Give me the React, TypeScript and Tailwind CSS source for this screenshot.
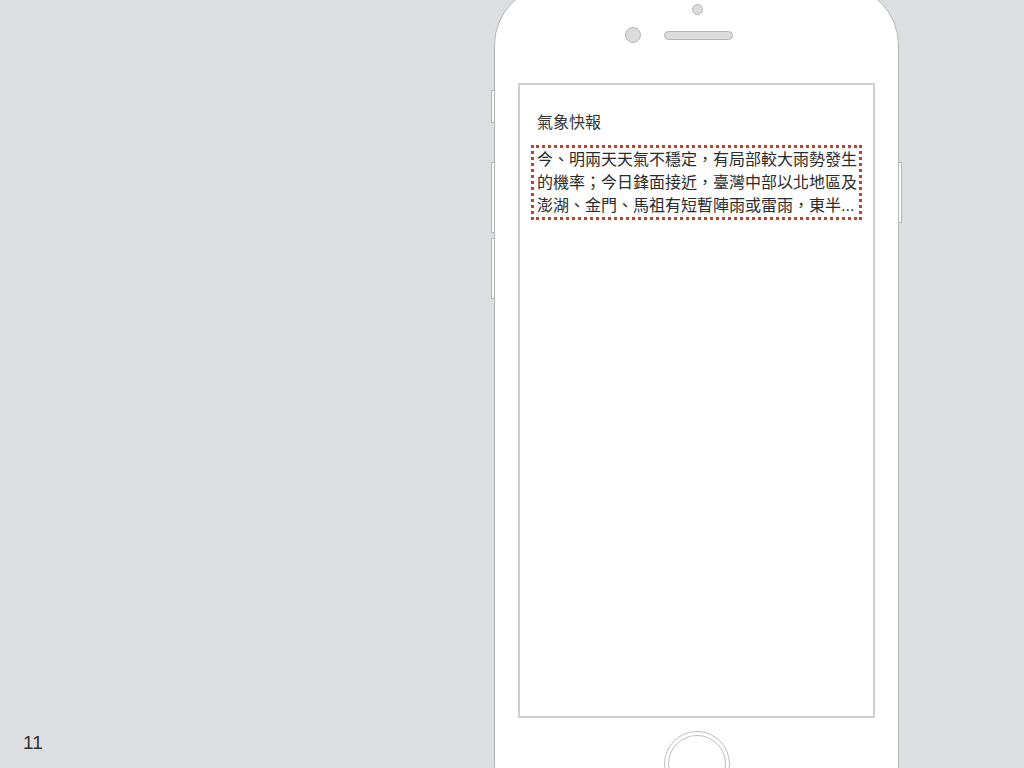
export default function App() {
  return (
    <div
      className="flex h-[768px] w-[1024px] overflow-hidden bg-[#dddee0]"
      style={{ fontFamily: '"Liberation Sans", "Noto Sans CJK TC", sans-serif' }}
    >
      <div className="flex w-[494px] shrink-0 flex-col justify-end pb-[14px] pl-[23px]">
        <span className="text-[19px] leading-[22px] text-[#333]">11</span>
      </div>

      <div className="relative mt-[-15px] flex h-[841px] w-[405px] shrink-0 flex-col items-center rounded-[60px] border-[1.5px] border-[#b5b5b5] bg-white">
        {/* side buttons */}
        <div className="absolute left-[-4px] top-[104px] h-[33px] w-[3px] rounded-l-[1px] border-[1.5px] border-r-0 border-[#b5b5b5] bg-white" />
        <div className="absolute left-[-4px] top-[176px] h-[71px] w-[3px] rounded-l-[1px] border-[1.5px] border-r-0 border-[#b5b5b5] bg-white" />
        <div className="absolute left-[-4px] top-[252px] h-[61px] w-[3px] rounded-l-[1px] border-[1.5px] border-r-0 border-[#b5b5b5] bg-white" />
        <div className="absolute right-[-4px] top-[176px] h-[61px] w-[3px] rounded-r-[1px] border-[1.5px] border-l-0 border-[#b5b5b5] bg-white" />

        <div className="ml-[1px] mt-[18px] h-[11px] w-[11px] rounded-full border-[1.5px] border-[#b5b5b5] bg-[#dcdcdc]" />
        <div className="mt-[12px] flex items-center pl-[2px]">
          <div className="h-[16px] w-[16px] rounded-full border-[1.5px] border-[#b5b5b5] bg-[#dcdcdc]" />
          <div className="ml-[23px] h-[9px] w-[69px] rounded-full border-[1.5px] border-[#b5b5b5] bg-[#dcdcdc]" />
          <div className="ml-[23px] h-[16px] w-[14px]" />
        </div>

        <div className="mt-[40px] flex h-[635px] w-[357px] flex-col border-2 border-[#cfcfcf] px-[11px] pt-[26px]">
          <div className="pl-[6px] text-[16px] leading-[24px] text-[#333]">氣象快報</div>
          <div className="mt-[10px] border-[3px] border-dotted border-[#c8402c] pl-[3px] pr-[1px]">
            <p className="w-[322px] text-[16px] leading-[23px] text-[#2a2a2a]">
              今、明兩天天氣不穩定，有局部較大雨勢發生的機率；今日鋒面接近，臺灣中部以北地區及澎湖、金門、馬祖有短暫陣雨或雷雨，東半...
            </p>
          </div>
        </div>

        <div className="mt-[13px] flex h-[66px] w-[66px] items-center justify-center rounded-full border-[1.5px] border-[#bdbdbd]">
          <div className="h-[58px] w-[58px] rounded-full border-[1.5px] border-[#bdbdbd]" />
        </div>
      </div>
    </div>
  );
}
